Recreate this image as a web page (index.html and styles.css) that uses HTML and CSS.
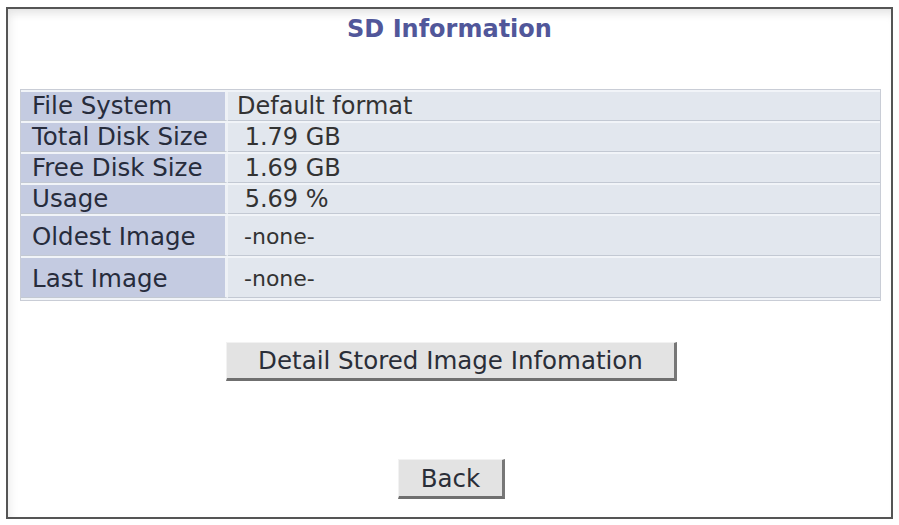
FILE: index.html
```html
<!DOCTYPE html>
<html lang="en">
<head>
    <meta charset="UTF-8">
    <title>SD Information</title>
    <link rel="stylesheet" href="styles.css">
</head>
<body>
    <div class="frame">
        <h1 class="title">SD Information</h1>
        <table class="info">
            <tr class="row">
                <td class="label">File System</td>
                <td class="value">Default format</td>
            </tr>
            <tr class="row">
                <td class="label">Total Disk Size</td>
                <td class="value">&nbsp;1.79 GB</td>
            </tr>
            <tr class="row">
                <td class="label">Free Disk Size</td>
                <td class="value">&nbsp;1.69 GB</td>
            </tr>
            <tr class="row">
                <td class="label">Usage</td>
                <td class="value">&nbsp;5.69 %</td>
            </tr>
            <tr class="row tall">
                <td class="label">Oldest Image</td>
                <td class="value small">&nbsp;-none-</td>
            </tr>
            <tr class="row tall">
                <td class="label">Last Image</td>
                <td class="value small">&nbsp;-none-</td>
            </tr>
        </table>
        <div class="actions">
            <button class="btn btn-detail">Detail Stored Image Infomation</button>
        </div>
        <div class="actions back">
            <button class="btn btn-back">Back</button>
        </div>
    </div>
</body>
</html>
```

FILE: styles.css
```css
body {
    margin: 0;
    background-color: #fff;
    font-family: "DejaVu Sans", Verdana, sans-serif;
}
.frame {
    margin: 7px 6px 6px 6px;
    height: 512px;
    border: 2px solid #555;
    box-sizing: border-box;
    box-shadow: inset 0 10px 10px -6px #e2e2e2, inset 8px 0 10px -6px #ececec;
    display: flex;
    flex-direction: column;
}
.title {
    margin: 1px 0 0 0;
    text-align: center;
    font-size: 24px;
    font-weight: bold;
    color: #51579a;
    line-height: 38px;
}
.info {
    margin: 41px 10px 0 12px;
    border: 1px solid #c9cdd6;
    border-spacing: 0 2px;
    background-color: #f1f4f8;
    border-collapse: separate;
}
.info td {
    padding: 0;
    font-size: 24.5px;
    color: #272c3c;
}
.row td {
    height: 28px;
    line-height: 28px;
    border-bottom: 1px solid #c3c9d3;
}
.row.tall td {
    height: 36px;
    padding-top: 3px;
}
.label {
    width: 193px;
    padding-left: 11px !important;
    background-color: #c4cbe1;
    border-right: 3px solid #eef1f6;
}
.value {
    padding-left: 9px !important;
    background-color: #e2e7ee;
    color: #333 !important;
    font-size: 24px !important;
}
.value.small {
    font-size: 22px !important;
}
.actions {
    display: flex;
    justify-content: center;
    margin-top: 41px;
    padding-left: 4px;
}
.actions.back {
    margin-top: 78px;
}
.btn {
    font-family: "DejaVu Sans", Verdana, sans-serif;
    font-size: 24.5px;
    color: #2a2e38;
    background-color: #e3e3e3;
    border-style: solid;
    border-width: 1px 3px 3px 1px;
    border-color: #f2f2f2 #777 #6f6f6f #f2f2f2;
    padding: 0;
}
.btn-detail {
    width: 451px;
    height: 39px;
}
.btn-back {
    width: 107px;
    height: 40px;
}
```
